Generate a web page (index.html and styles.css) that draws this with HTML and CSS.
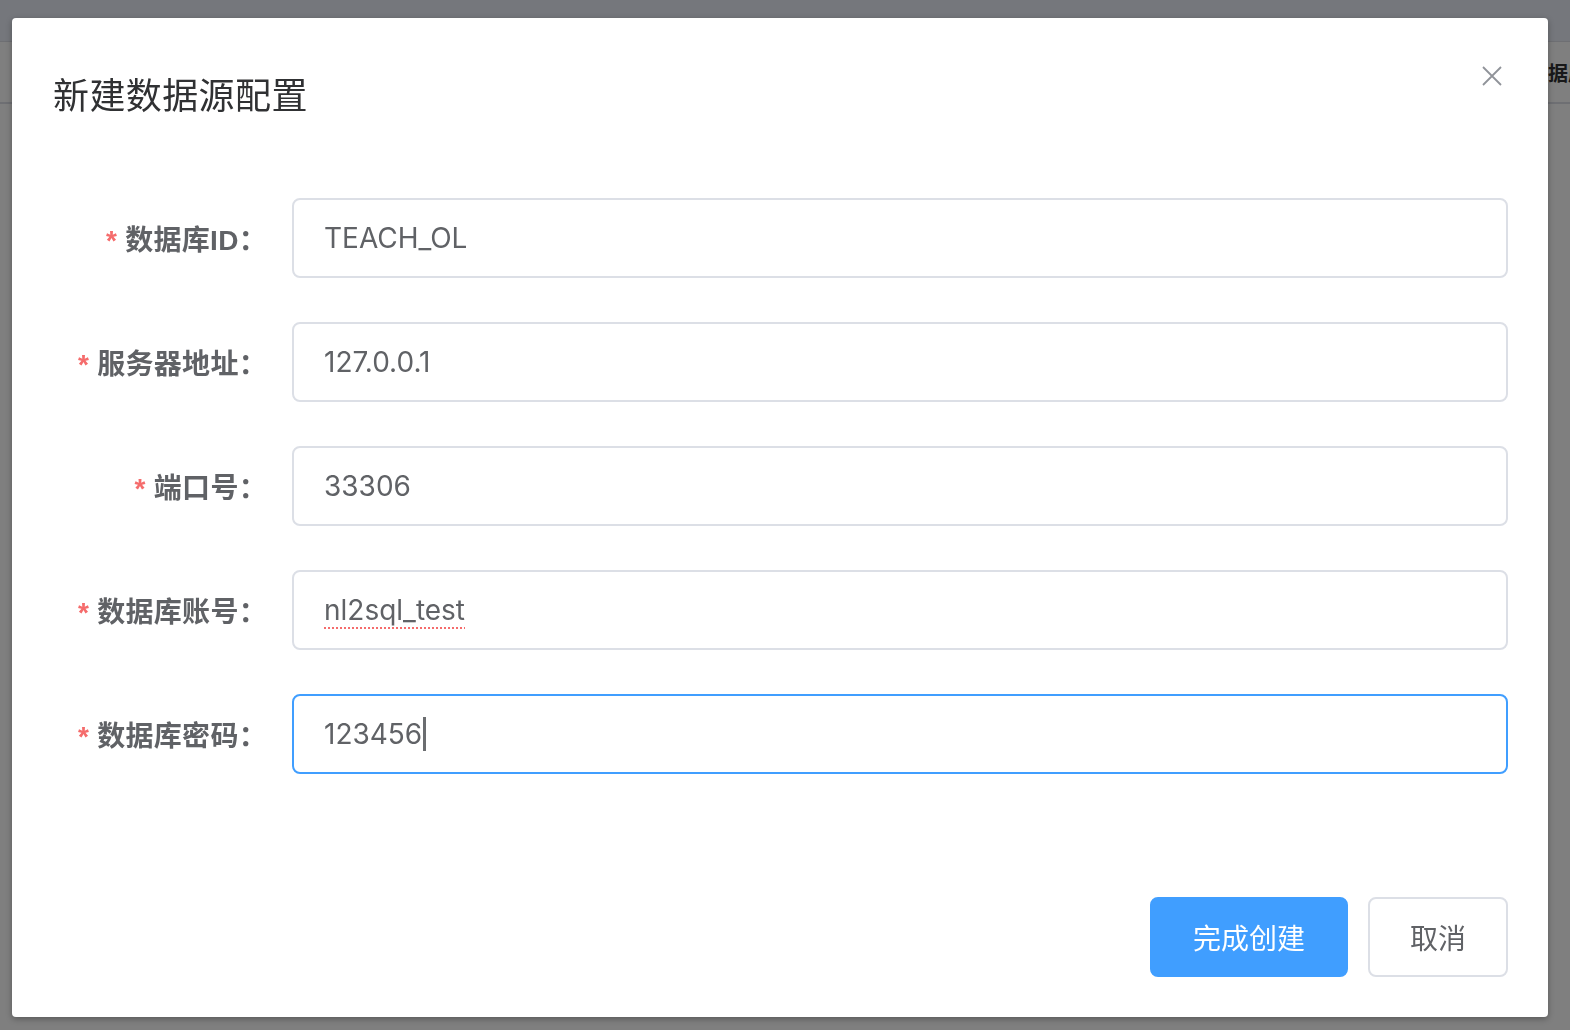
FILE: index.html
```html
<!DOCTYPE html>
<html lang="zh-CN">
<head>
<meta charset="utf-8">
<title>新建数据源配置</title>
<link rel="stylesheet" href="styles.css">
</head>
<body>
<div class="page">
  <div class="topbar"></div>
  <div class="tabs"><span class="tab-title">数据库管理</span></div>
</div>
<div class="overlay"></div>
<div class="dialog">
  <div class="dialog-header">
    <span class="dialog-title">新建数据源配置</span>
    <button class="dialog-close" aria-label="关闭">
      <svg width="20" height="20" viewBox="0 0 20 20"><path d="M1 1 L19 19 M19 1 L1 19" stroke="#909399" stroke-width="1.8" fill="none"/></svg>
    </button>
  </div>
  <div class="form">
    <div class="form-item">
      <label class="form-label"><span class="req">*</span>数据库ID：</label>
      <div class="input">TEACH_OL</div>
    </div>
    <div class="form-item">
      <label class="form-label"><span class="req">*</span>服务器地址：</label>
      <div class="input">127.0.0.1</div>
    </div>
    <div class="form-item">
      <label class="form-label"><span class="req">*</span>端口号：</label>
      <div class="input">33306</div>
    </div>
    <div class="form-item">
      <label class="form-label"><span class="req">*</span>数据库账号：</label>
      <div class="input"><span class="misspelled">nl2sql_test</span></div>
    </div>
    <div class="form-item">
      <label class="form-label"><span class="req">*</span>数据库密码：</label>
      <div class="input is-focus">123456<span class="caret"></span></div>
    </div>
  </div>
  <div class="dialog-footer">
    <button class="btn btn-primary">完成创建</button>
    <button class="btn btn-default">取消</button>
  </div>
</div>
</body>
</html>
```

FILE: styles.css
```css
* { box-sizing: border-box; }
html, body {
  margin: 0;
  padding: 0;
  width: 1570px;
  height: 1030px;
  overflow: hidden;
  background: #fff;
  font-family: "Helvetica Neue", "Liberation Sans", "Noto Sans CJK SC", sans-serif;
}
.page {
  display: flex;
  flex-direction: column;
}
.topbar {
  height: 42px;
  background: #eaeef8;
  border-bottom: 1px solid #dcdfe6;
}
.tabs {
  height: 62px;
  border-bottom: 2px solid #dcdfe6;
  display: flex;
  align-items: center;
  white-space: nowrap;
}
.tab-title {
  margin-left: 1528px;
  font-size: 20px;
  font-weight: 700;
  color: #303133;
  font-family: "Noto Sans CJK SC", sans-serif;
}
.overlay {
  position: fixed;
  inset: 0;
  background: rgba(0, 0, 0, 0.5);
}
.dialog {
  position: absolute;
  left: 12px;
  top: 18px;
  width: 1536px;
  height: 999px;
  background: #fff;
  border-radius: 4px;
  box-shadow: 0 2px 6px rgba(0, 0, 0, 0.3);
  display: flex;
  flex-direction: column;
}
.dialog-header {
  position: relative;
  padding: 57px 40px 87px 41px;
}
.dialog-title {
  display: block;
  font-size: 36px;
  line-height: 36px;
  letter-spacing: 0.4px;
  color: #303133;
  font-family: "Noto Sans CJK SC", sans-serif;
}
.dialog-close {
  position: absolute;
  top: 48px;
  right: 46px;
  width: 20px;
  height: 20px;
  padding: 0;
  border: 0;
  background: none;
  display: flex;
}
.form {
  display: flex;
  flex-direction: column;
  gap: 44px;
  padding: 0 40px;
}
.form-item {
  display: flex;
  align-items: center;
}
.form-label {
  width: 240px;
  flex: none;
  padding-right: 25px;
  text-align: right;
  font-size: 28px;
  font-weight: 700;
  color: #606266;
  letter-spacing: 0.3px;
}
.req {
  color: #f56c6c;
  margin-right: 8px;
  font-weight: 700;
}
.input {
  flex: 1;
  height: 80px;
  border: 2px solid #dcdfe6;
  border-radius: 8px;
  padding: 0 30px;
  display: flex;
  align-items: center;
  font-size: 28px;
  font-family: Inter, "Noto Sans CJK SC", sans-serif;
  color: #606266;
}
.input.is-focus {
  border-color: #409eff;
}
.misspelled {
  text-decoration: underline dotted #f56c6c;
  text-decoration-thickness: 2px;
  text-underline-offset: 7px;
}
.caret {
  display: inline-block;
  width: 3px;
  height: 34px;
  margin-left: 1px;
  background: #6b6d70;
}
.dialog-footer {
  margin-top: auto;
  display: flex;
  justify-content: flex-end;
  gap: 20px;
  padding: 0 40px 40px;
}
.btn {
  height: 80px;
  padding: 0 40px;
  border-radius: 8px;
  font-size: 28px;
  font-family: "Noto Sans CJK SC", sans-serif;
  border: 2px solid #dcdfe6;
  background: #fff;
  color: #606266;
}
.btn-primary {
  background: #409eff;
  border-color: #409eff;
  color: #fff;
  padding: 0 41px;
}
```
